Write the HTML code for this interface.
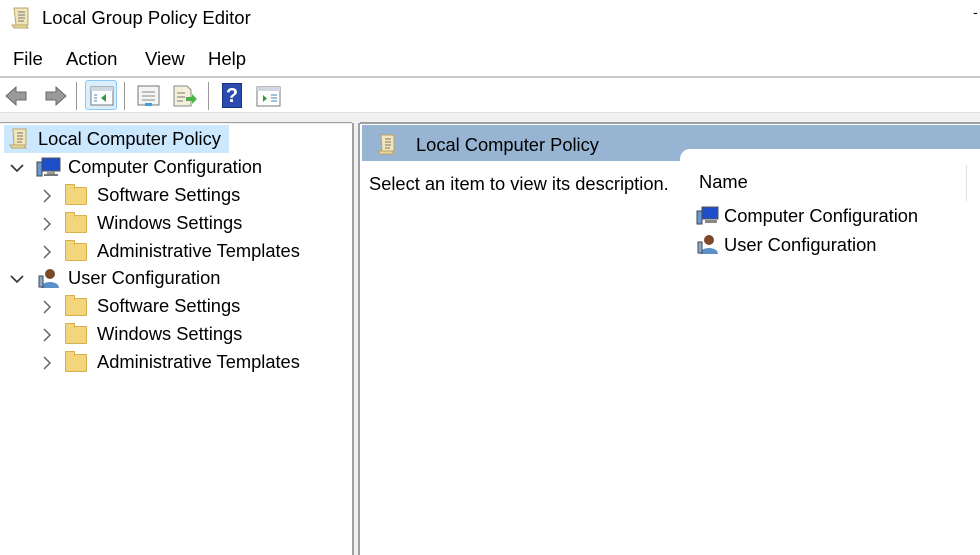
<!DOCTYPE html>
<html><head><style>
body{margin:0;width:980px;height:555px;overflow:hidden;background:#fff;font-family:"Liberation Sans",sans-serif;color:#000;position:relative}
.a{position:absolute;white-space:nowrap}
.t{font-size:18.3px}
.folder{position:absolute;width:20px;height:16px;background:#f3d57c;border:1px solid #d8b14e;border-radius:1px}
.folder:before{content:"";position:absolute;left:-1px;top:-4px;width:8px;height:4px;background:#f3d57c;border:1px solid #d8b14e;border-bottom:none}
.chev{position:absolute}
</style></head><body>
<svg class="a" style="left:10px;top:6px" width="22" height="24" viewBox="0 0 22 24"><path d="M4 2h14v17H6z" fill="#f2e6b8" stroke="#b9a46a"/><path d="M2 19h14l2 3H4z" fill="#e8d79c" stroke="#b9a46a"/><path d="M8 6h7M8 9h7M8 12h7M8 15h6" stroke="#777"/></svg>
<div class="a" style="left:42px;top:7px;font-size:18.5px">Local Group Policy Editor</div>
<div class="a" style="left:973px;top:4px;font-size:14px">-</div>
<div class="a" style="left:13px;top:48px;font-size:18.5px">File</div>
<div class="a" style="left:66px;top:48px;font-size:18.5px">Action</div>
<div class="a" style="left:145px;top:48px;font-size:18.5px">View</div>
<div class="a" style="left:208px;top:48px;font-size:18.5px">Help</div>
<div class="a" style="left:0;top:76px;width:980px;height:2px;background:#c8c8c8"></div>
<svg class="a" style="left:4px;top:84px" width="64" height="24"><path d="M2 12l10-9v5h10v8H12v5z" fill="#9a9a9a" stroke="#6a6a6a"/><path d="M62 12l-10-9v5H42v8h10v5z" fill="#9a9a9a" stroke="#6a6a6a"/></svg>
<div class="a" style="left:76px;top:82px;width:1px;height:28px;background:#999"></div>
<div class="a" style="left:85px;top:80px;width:32px;height:30px;background:#dbeefc;border:1px solid #8cc7f5;border-radius:3px;box-sizing:border-box"></div>
<svg class="a" style="left:90px;top:86px" width="24" height="20"><rect x="1" y="1" width="22" height="18" fill="#fff" stroke="#777"/><rect x="1" y="1" width="22" height="4" fill="#cfd8e3"/><path d="M16 8v8l-5-4z" fill="#3a9a3a"/><path d="M4 9h3M4 12h3M4 15h3" stroke="#4682b4"/></svg>
<div class="a" style="left:124px;top:82px;width:1px;height:28px;background:#999"></div>
<svg class="a" style="left:137px;top:85px" width="24" height="22"><rect x="1" y="1" width="21" height="19" fill="#f4f4f4" stroke="#777"/><path d="M5 7h13M5 11h13M5 15h13" stroke="#888"/><rect x="8" y="18" width="7" height="3" fill="#3aa0e0"/></svg>
<svg class="a" style="left:172px;top:85px" width="26" height="22"><path d="M2 1h13l4 4v16H2z" fill="#f4efd8" stroke="#888"/><path d="M5 8h8M5 12h8M5 16h6" stroke="#777"/><path d="M14 12h6v-3l5 5-5 5v-3h-6z" fill="#4bb34b"/></svg>
<div class="a" style="left:208px;top:82px;width:1px;height:28px;background:#999"></div>
<div class="a" style="left:222px;top:83px;width:20px;height:25px;background:#2b4cae;border:1px solid #183080;color:#fff;font-weight:bold;font-size:20px;text-align:center;line-height:25px;box-sizing:border-box">?</div>
<svg class="a" style="left:256px;top:86px" width="25" height="21"><rect x="1" y="1" width="23" height="19" fill="#fff" stroke="#777"/><rect x="1" y="1" width="23" height="4" fill="#cfd8e3"/><path d="M7 9v7l4-3.5z" fill="#3a9a3a"/><path d="M15 9h6M15 12h6M15 15h6" stroke="#4682b4"/></svg>
<div class="a" style="left:0;top:112px;width:980px;height:11px;background:#f0f0f0;border-top:1px solid #e0e0e0"></div>
<div class="a" style="left:352px;top:123px;width:8px;height:432px;background:#f0f0f0;border-left:2px solid #a0a0a0;border-right:2px solid #a0a0a0;box-sizing:border-box"></div>
<div class="a" style="left:0;top:122px;width:352px;height:1px;background:#a0a0a0"></div>
<div class="a" style="left:360px;top:122px;width:620px;height:2px;background:#a0a0a0"></div>
<div class="a" style="left:4px;top:125px;width:225px;height:28px;background:#cce8ff"></div>
<svg class="a" style="left:8px;top:128px" width="22" height="22"><path d="M5 1h13v16H6z" fill="#f2e6b8" stroke="#b9a46a"/><path d="M2 17h14l2 3H4z" fill="#e8d79c" stroke="#b9a46a"/><path d="M9 5h6M9 8h6M9 11h6M9 14h5" stroke="#777"/></svg>
<div class="a t" style="left:38px;top:128px">Local Computer Policy</div>
<svg class="chev" style="left:10px;top:163px" width="14" height="10"><path d="M1 2l6 6 6-6" fill="none" stroke="#333" stroke-width="1.6"/></svg>
<svg class="a" style="left:35px;top:156px" width="26" height="22"><rect x="7" y="2" width="18" height="13" fill="#1e4fc9" stroke="#555"/><rect x="12" y="15" width="8" height="3" fill="#999"/><rect x="9" y="18" width="14" height="2" fill="#777"/><rect x="2" y="6" width="5" height="14" fill="#6a9ad0" stroke="#445"/></svg>
<div class="a t" style="left:68px;top:156px">Computer Configuration</div>
<svg class="chev" style="left:42px;top:189px" width="10" height="14"><path d="M2 1l6 6-6 6" fill="none" stroke="#666" stroke-width="1.5"/></svg><div class="folder" style="left:65px;top:187px"></div>
<div class="a t" style="left:97px;top:184px">Software Settings</div>
<svg class="chev" style="left:42px;top:217px" width="10" height="14"><path d="M2 1l6 6-6 6" fill="none" stroke="#666" stroke-width="1.5"/></svg><div class="folder" style="left:65px;top:215px"></div>
<div class="a t" style="left:97px;top:212px">Windows Settings</div>
<svg class="chev" style="left:42px;top:245px" width="10" height="14"><path d="M2 1l6 6-6 6" fill="none" stroke="#666" stroke-width="1.5"/></svg><div class="folder" style="left:65px;top:243px"></div>
<div class="a t" style="left:97px;top:240px">Administrative Templates</div>
<svg class="chev" style="left:10px;top:274px" width="14" height="10"><path d="M1 2l6 6 6-6" fill="none" stroke="#333" stroke-width="1.6"/></svg>
<svg class="a" style="left:35px;top:267px" width="26" height="22"><circle cx="15" cy="7" r="5" fill="#7a4a2a"/><path d="M6 21c0-8 18-8 18 0z" fill="#5b8fc8"/><rect x="4" y="9" width="4" height="11" fill="#8aaad0" stroke="#445"/></svg>
<div class="a t" style="left:68px;top:267px">User Configuration</div>
<svg class="chev" style="left:42px;top:300px" width="10" height="14"><path d="M2 1l6 6-6 6" fill="none" stroke="#666" stroke-width="1.5"/></svg><div class="folder" style="left:65px;top:298px"></div>
<div class="a t" style="left:97px;top:295px">Software Settings</div>
<svg class="chev" style="left:42px;top:328px" width="10" height="14"><path d="M2 1l6 6-6 6" fill="none" stroke="#666" stroke-width="1.5"/></svg><div class="folder" style="left:65px;top:326px"></div>
<div class="a t" style="left:97px;top:323px">Windows Settings</div>
<svg class="chev" style="left:42px;top:356px" width="10" height="14"><path d="M2 1l6 6-6 6" fill="none" stroke="#666" stroke-width="1.5"/></svg><div class="folder" style="left:65px;top:354px"></div>
<div class="a t" style="left:97px;top:351px">Administrative Templates</div>
<div class="a" style="left:362px;top:125px;width:618px;height:36px;background:#98b4d3"></div>
<div class="a" style="left:680px;top:149px;width:300px;height:12px;background:#fff;border-top-left-radius:10px"></div>
<svg class="a" style="left:376px;top:133px" width="22" height="24"><path d="M5 2h13v16H6z" fill="#f2e6b8" stroke="#b9a46a"/><path d="M2 18h14l2 3H4z" fill="#e8d79c" stroke="#b9a46a"/><path d="M9 6h6M9 9h6M9 12h6M9 15h5" stroke="#777"/></svg>
<div class="a t" style="left:416px;top:134px">Local Computer Policy</div>
<div class="a t" style="left:369px;top:173px">Select an item to view its description.</div>
<div class="a t" style="left:699px;top:171px">Name</div>
<div class="a" style="left:966px;top:165px;width:1px;height:36px;background:#e0e0e0"></div>
<svg class="a" style="left:696px;top:205px" width="24" height="20"><rect x="6" y="2" width="16" height="12" fill="#1e4fc9" stroke="#555"/><rect x="9" y="15" width="12" height="3" fill="#888"/><rect x="1" y="6" width="5" height="13" fill="#6a9ad0" stroke="#445"/></svg>
<div class="a t" style="left:724px;top:205px">Computer Configuration</div>
<svg class="a" style="left:696px;top:234px" width="24" height="21"><circle cx="13" cy="6" r="5" fill="#7a4a2a"/><path d="M4 20c0-8 18-8 18 0z" fill="#5b8fc8"/><rect x="2" y="8" width="4" height="11" fill="#8aaad0" stroke="#445"/></svg>
<div class="a t" style="left:724px;top:234px">User Configuration</div>
</body></html>
